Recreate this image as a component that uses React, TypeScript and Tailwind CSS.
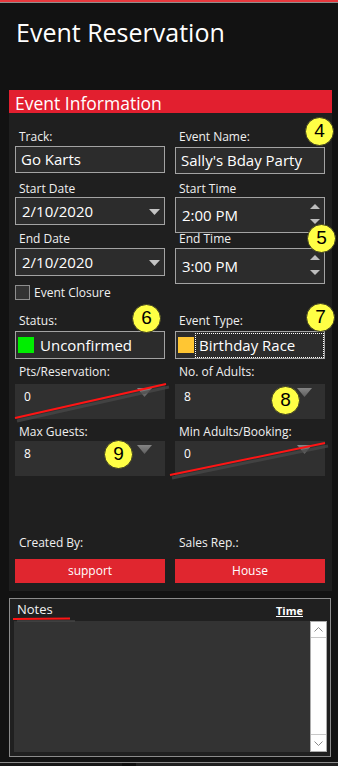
import type { ReactNode } from "react";

function Label({ children }: { children: ReactNode }) {
	return <div className="h-[17px] pl-[4px] text-[12px] leading-[17px] text-[#f0f0f0]">{children}</div>;
}

function TextBox({ value, tall = false }: { value: string; tall?: boolean }) {
	return (
		<div
			className={`flex items-center border border-[#a3a3a3] bg-[#2c2c2c] pl-[5px] text-[15px] text-white ${tall ? "h-[28px]" : "h-[27px]"}`}
		>
			{value}
		</div>
	);
}

function DateBox({ value }: { value: string }) {
	return (
		<div className="relative flex h-[28px] items-center border border-[#a3a3a3] bg-[#2c2c2c] pl-[6px] text-[15px] text-white">
			{value}
			<svg className="absolute right-[4px] top-[11px]" width="11" height="6" viewBox="0 0 11 6">
				<polygon points="0,0 11,0 5.5,6" fill="#c4c4c4" />
			</svg>
		</div>
	);
}

function TimeBox({ value }: { value: string }) {
	return (
		<div className="relative flex h-[36px] items-center border border-[#a3a3a3] bg-[#2c2c2c] pl-[6px] text-[15px] text-white">
			{value}
			<svg className="absolute right-[4px] top-[6px]" width="10" height="5" viewBox="0 0 10 5">
				<polygon points="0,5 10,5 5,0" fill="#bdbdbd" />
			</svg>
			<svg className="absolute right-[4px] bottom-[8px]" width="10" height="5" viewBox="0 0 10 5">
				<polygon points="0,0 10,0 5,5" fill="#bdbdbd" />
			</svg>
		</div>
	);
}

function SwatchBox({ color, value, focused = false }: { color: string; value: string; focused?: boolean }) {
	return (
		<div className="flex h-[28px] items-center border border-[#a3a3a3] bg-[#2c2c2c] pl-[2px] text-[15px] text-white">
			<div className={`h-[16px] w-[16px] ${color}`} />
			{focused ? (
				<div className="ml-[1px] flex h-[25px] flex-1 items-center border border-dotted border-white pl-[3px]">{value}</div>
			) : (
				<div className="ml-[6px]">{value}</div>
			)}
		</div>
	);
}

function NumBox({ value, children }: { value: string; children?: ReactNode }) {
	return (
		<div className="relative h-[35px] bg-[#303030] pl-[9px] pt-[4px] text-[12px] leading-[17px] text-white">
			{value}
			<svg className="absolute right-[13px] top-[4px]" width="15" height="9" viewBox="0 0 15 9">
				<defs>
					<linearGradient id="tri" x1="0" y1="0" x2="0" y2="1">
						<stop offset="0" stopColor="#858585" />
						<stop offset="1" stopColor="#5e5e5e" />
					</linearGradient>
				</defs>
				<polygon points="0,0 15,0 7.5,9" fill="url(#tri)" />
			</svg>
			{children}
		</div>
	);
}

function Strike({ x1, y1, x2, y2 }: { x1: number; y1: number; x2: number; y2: number }) {
	return (
		<svg className="pointer-events-none absolute left-0 top-0 overflow-visible" width="150" height="35">
			<line x1={x1 + 2} y1={y1 + 3} x2={x2 + 3} y2={y2 + 3} stroke="#4a4a4a" strokeWidth="3" opacity="0.7" />
			<line x1={x1} y1={y1} x2={x2} y2={y2} stroke="#ff1414" strokeWidth="2" />
		</svg>
	);
}

function Marker({ n, left, top }: { n: number; left: number; top: number }) {
	return (
		<div
			className="absolute flex h-[29px] w-[29px] items-center justify-center rounded-full border border-[#3a3a20] bg-[#ffff45] font-['Liberation_Sans',sans-serif] text-[19px] text-black"
			style={{ left, top }}
		>
			{n}
		</div>
	);
}

export default function App() {
	return (
		<div className="relative h-[766px] w-[338px] overflow-hidden bg-[#121212] font-['Open_Sans',sans-serif] text-white">
			<div className="h-[2px] bg-[#e8383d]" />
			<div className="h-px bg-[#8f8f8f]" />
			<h1 className="ml-[16px] mt-[12px] text-[25px] leading-[34px] text-white">Event Reservation</h1>

			<div className="ml-[9px] mt-[41px] w-[323px] bg-[#1f1f1f] pb-[8px]">
				<div className="h-[23px] bg-[#e21f2f] pl-[6px] text-[17.5px] leading-[27px] text-white">Event Information</div>

				<div className="pl-[6px]">
					<div className="mt-[15px] flex gap-[10px]">
						<div className="w-[150px]">
							<Label>Track:</Label>
							<div className="mt-px">
								<TextBox value="Go Karts" />
							</div>
						</div>
						<div className="w-[150px]">
							<Label>Event Name:</Label>
							<div className="mt-[2px]">
								<TextBox value="Sally's Bday Party" />
							</div>
						</div>
					</div>

					<div className="mt-[6px] flex h-[45px] gap-[10px]">
						<div className="w-[150px]">
							<Label>Start Date</Label>
							<DateBox value="2/10/2020" />
						</div>
						<div className="w-[150px]">
							<Label>Start Time</Label>
							<TimeBox value="2:00 PM" />
						</div>
					</div>

					<div className="mt-[5px] flex h-[46px] gap-[10px]">
						<div className="w-[150px]">
							<Label>End Date</Label>
							<div className="mt-px">
								<DateBox value="2/10/2020" />
							</div>
						</div>
						<div className="w-[150px]">
							<Label>End Time</Label>
							<div className="mt-px">
								<TimeBox value="3:00 PM" />
							</div>
						</div>
					</div>

					<div className="mt-[9px] flex h-[15px] items-center gap-[4px]">
						<div className="h-[15px] w-[15px] border border-[#8e8e8e] bg-[#333333]" />
						<span className="text-[12px] leading-[15px] text-[#f0f0f0]">Event Closure</span>
					</div>

					<div className="mt-[12px] flex gap-[10px]">
						<div className="w-[150px]">
							<Label>Status:</Label>
							<div className="mt-[2px]">
								<SwatchBox color="bg-[#00ee00]" value="Unconfirmed" />
							</div>
						</div>
						<div className="w-[150px]">
							<Label>Event Type:</Label>
							<div className="mt-[2px]">
								<SwatchBox color="bg-[#ffc633]" value="Birthday Race" focused />
							</div>
						</div>
					</div>

					<div className="mt-[4px] flex gap-[10px]">
						<div className="w-[150px]">
							<Label>Pts/Reservation:</Label>
							<div className="mt-[4px]">
								<NumBox value="0">
									<Strike x1={0} y1={34} x2={151} y2={0} />
								</NumBox>
							</div>
						</div>
						<div className="w-[150px]">
							<Label>No. of Adults:</Label>
							<div className="mt-[4px]">
								<NumBox value="8" />
							</div>
						</div>
					</div>

					<div className="mt-[4px] flex gap-[10px]">
						<div className="w-[150px]">
							<Label>Max Guests:</Label>
							<div className="mt-px">
								<NumBox value="8" />
							</div>
						</div>
						<div className="w-[150px]">
							<Label>Min Adults/Booking:</Label>
							<div className="mt-px">
								<NumBox value="0">
									<Strike x1={-5} y1={34} x2={150} y2={2} />
								</NumBox>
							</div>
						</div>
					</div>

					<div className="mt-[58px] flex gap-[10px]">
						<div className="w-[150px]">
							<Label>Created By:</Label>
							<div className="mt-[8px] flex h-[24px] items-center justify-center bg-[#e0262f] text-[12px] text-white">support</div>
						</div>
						<div className="w-[150px]">
							<Label>Sales Rep.:</Label>
							<div className="mt-[8px] flex h-[24px] items-center justify-center bg-[#e0262f] text-[12px] text-white">House</div>
						</div>
					</div>
				</div>
			</div>

			<div className="ml-[9px] mt-[7px] h-[159px] w-[322px] border border-[#8b8b8b] bg-[#202020]">
				<div className="relative flex h-[22px] items-start justify-between">
					<span className="ml-[7px] mt-px text-[13px] leading-[18px] text-[#f2f2f2]">Notes</span>
					<span className="mr-[27px] mt-[5px] text-[11px] font-bold leading-[14px] text-white underline">Time</span>
					<svg className="absolute left-[3px] top-[18px]" width="62" height="6" viewBox="0 0 62 6">
						<line x1="4" y1="4" x2="62" y2="4" stroke="#4a4a4a" strokeWidth="2" opacity="0.6" />
						<line x1="0" y1="2" x2="57" y2="1.4" stroke="#ff1414" strokeWidth="2" />
					</svg>
				</div>
				<div className="flex">
					<div className="ml-[4px] h-[131px] w-[296px] bg-[#333333]" />
					<div className="flex h-[131px] w-[17px] flex-col border border-[#adadad] bg-white">
						<div className="flex h-[16px] items-center justify-center border-b border-[#c8c8c8]">
							<svg width="9" height="5" viewBox="0 0 9 5">
								<polyline points="0.5,4.5 4.5,0.5 8.5,4.5" fill="none" stroke="#8a8a8a" strokeWidth="1" />
							</svg>
						</div>
						<div className="flex-1" />
						<div className="flex h-[17px] items-center justify-center border-t border-[#c8c8c8]">
							<svg width="9" height="5" viewBox="0 0 9 5">
								<polyline points="0.5,0.5 4.5,4.5 8.5,0.5" fill="none" stroke="#8a8a8a" strokeWidth="1" />
							</svg>
						</div>
					</div>
				</div>
			</div>

			<div className="mt-[5px] h-px bg-[#8c8c8c]" />
			<div className="flex h-[6px]">
				<div className="w-[122px] bg-[#171717]" />
				<div className="w-[14px] bg-[#0d0d0d]" />
				<div className="flex-1 bg-[#1f1f1f]" />
			</div>

			<Marker n={4} left={305} top={117} />
			<Marker n={5} left={307} top={224} />
			<Marker n={6} left={132} top={304} />
			<Marker n={7} left={306} top={303} />
			<Marker n={8} left={271} top={386} />
			<Marker n={9} left={104} top={440} />
		</div>
	);
}
